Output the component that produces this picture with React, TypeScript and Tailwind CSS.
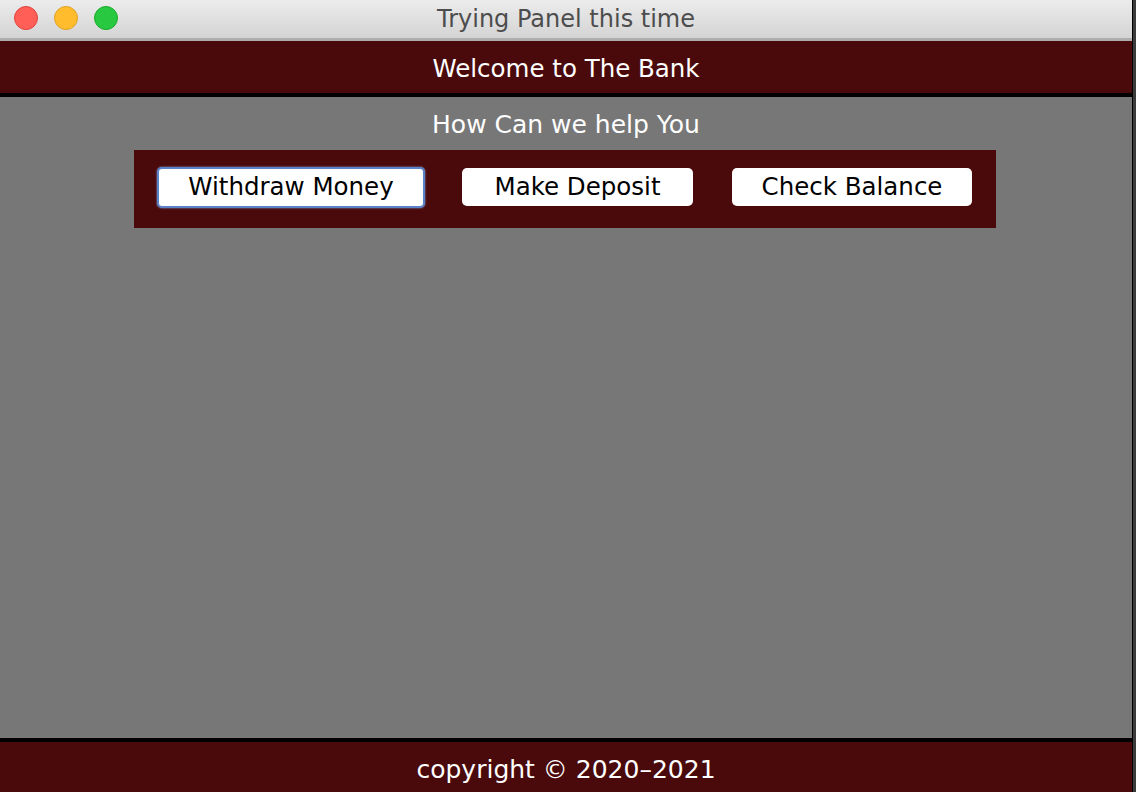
export default function App() {
  const font = { fontFamily: '"DejaVu Sans", "Liberation Sans", sans-serif' }

  return (
    <div className="flex h-[792px] w-[1136px] overflow-hidden bg-[#3b3b3b]" style={font}>
      <div className="flex h-full w-[1133px] flex-col border-r border-black">
        {/* title bar */}
        <div className="relative flex h-[41px] shrink-0 items-center justify-center border-b-[3px] border-[#aeaeae] bg-gradient-to-b from-[#ececec] to-[#d4d4d4]">
          <div className="absolute left-[14px] top-[6px] flex gap-[16px]">
            <span className="h-[24px] w-[24px] rounded-full border border-[#e0443e] bg-[#ff5f57]" />
            <span className="h-[24px] w-[24px] rounded-full border border-[#dea123] bg-[#ffbd2e]" />
            <span className="h-[24px] w-[24px] rounded-full border border-[#1aab29] bg-[#28c840]" />
          </div>
          <span className="text-[24px] leading-none text-[#4d4d4d]">Trying Panel this time</span>
        </div>

        {/* header */}
        <div className="flex h-[56px] shrink-0 items-center justify-center border-b-4 border-black bg-[#4a0a0b] pt-[5px]">
          <span className="text-[24.5px] text-white">Welcome to The Bank</span>
        </div>

        {/* body */}
        <div className="flex flex-1 flex-col items-center bg-[#777777]">
          <div className="pt-[12px] text-[25px] leading-[31px] text-white">How Can we help You</div>
          <div className="mr-[2px] mt-[10px] flex h-[78px] w-[862px] items-start gap-[37px] bg-[#4a0a0b] pl-[23px] pt-[17px]">
            <button className="h-[41px] w-[268px] rounded-[5px] border-2 border-[#5a82c8] bg-white text-[24.5px] text-black shadow-[0_0_2px_#8fb3ee]">
              Withdraw Money
            </button>
            <button className="mt-[1px] h-[38px] w-[231px] rounded-[5px] bg-white text-[24.5px] text-black">
              Make Deposit
            </button>
            <button className="ml-[2px] mt-[1px] h-[38px] w-[240px] rounded-[5px] bg-white text-[24.5px] text-black">
              Check Balance
            </button>
          </div>
        </div>

        {/* footer */}
        <div className="flex h-[54px] shrink-0 items-center justify-center border-t-4 border-black bg-[#4a0a0b] pt-[5px]">
          <span className="text-[25px] text-white">copyright © 2020–2021</span>
        </div>
      </div>
    </div>
  )
}
